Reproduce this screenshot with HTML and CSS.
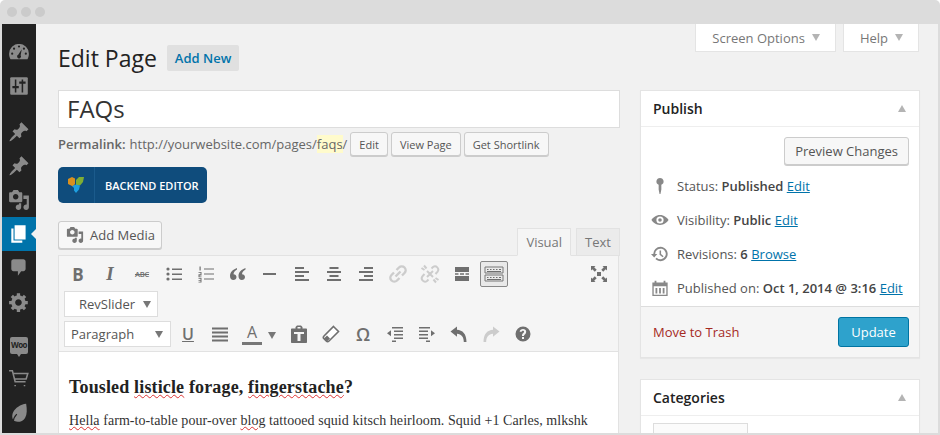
FILE: index.html
```html
<!DOCTYPE html>
<html lang="en">
<head>
<meta charset="UTF-8">
<title>Edit Page</title>
<link rel="stylesheet" href="styles.css">
</head>
<body>
<div class="window">
<div class="titlebar"><i class="dot"></i><i class="dot"></i><i class="dot"></i></div>
<div class="frame">

<nav class="sidebar">
<div class="menu-group">
<a class="menu-item"><svg viewBox="0 0 20 20"><path d="M10 2.500a9 9 0 0 0-9 9c0 1.900.5 3.500 1.300 5h15.400c.8-1.500 1.300-3.100 1.300-5a9 9 0 0 0-9-9z"/><g fill="#222"><circle cx="10" cy="5" r="1"/><circle cx="5.500" cy="7" r="1"/><circle cx="14.500" cy="7" r="1"/><circle cx="3.800" cy="11.500" r="1"/><circle cx="16.200" cy="11.500" r="1"/><path d="M12.500 7.500l-1 5.500a1.800 1.800 0 1 1-2.200-.6z"/></g></svg></a>
<a class="menu-item"><svg viewBox="0 0 20 20"><rect x="2" y="2" width="16" height="16" rx="1"/><path d="M6.200 4h1.400v6H6.200zM4 10h5.800v2H4zM6.200 12h1.400v4H6.200zM12.400 4h1.400v2h-1.400zM10.200 6H16v2h-5.800zM12.400 8h1.400v8h-1.400z" fill="#222"/></svg></a>
</div>
<div class="menu-group">
<a class="menu-item"><svg viewBox="0 0 20 20"><path d="M10.440 3.020l1.820-1.820 6.360 6.350-1.830 1.820c-1.050-.68-2.480-.57-3.410.36l-.75.75c-.92.93-1.040 2.350-.35 3.410l-1.830 1.820-2.410-2.410-2.800 2.790c-.42.42-3.380 2.710-3.800 2.290s1.860-3.390 2.280-3.810l2.790-2.790L4.100 9.360l1.830-1.820c1.050.69 2.480.57 3.400-.36l.75-.75c.93-.92 1.050-2.350.36-3.410z"/></svg></a>
<a class="menu-item"><svg viewBox="0 0 20 20"><path d="M10.440 3.020l1.820-1.820 6.360 6.350-1.830 1.820c-1.050-.68-2.480-.57-3.410.36l-.75.75c-.92.93-1.040 2.350-.35 3.410l-1.830 1.820-2.410-2.410-2.800 2.790c-.42.42-3.380 2.710-3.800 2.290s1.860-3.390 2.280-3.810l2.790-2.790L4.100 9.360l1.830-1.820c1.050.69 2.480.57 3.400-.36l.75-.75c.93-.92 1.050-2.350.36-3.410z"/></svg></a>
<a class="menu-item"><svg viewBox="0 0 20 20"><path d="M13 11V4c0-.55-.45-1-1-1h-1.670L9 1H5L3.670 3H2c-.55 0-1 .45-1 1v7c0 .55.45 1 1 1h10c.55 0 1-.45 1-1zM7 4.500c1.380 0 2.500 1.120 2.500 2.500S8.380 9.500 7 9.500 4.500 8.380 4.500 7 5.620 4.500 7 4.500zM14 6h5v10.500c0 1.380-1.120 2.500-2.500 2.500S14 17.880 14 16.500s1.120-2.500 2.500-2.500c.17 0 .34.02.5.05V9h-3V6zm-4 8.050V13h2v3.500c0 1.380-1.120 2.500-2.500 2.500S7 17.880 7 16.500 8.120 14 9.500 14c.17 0 .34.02.5.05z"/></svg></a>
<a class="menu-item active"><svg viewBox="0 0 20 20"><path d="M6 15V2h10v13H6zm-1 1h8v2H3V5h2v11z"/></svg></a>
<a class="menu-item"><svg viewBox="0 0 20 20"><path d="M5 2h9c1.100 0 2 .9 2 2v7c0 1.100-.9 2-2 2h-2l-3 4v-4H5c-1.100 0-2-.9-2-2V4c0-1.100.9-2 2-2z"/></svg></a>
<a class="menu-item"><svg viewBox="0 0 20 20"><path d="M18 12h-2.180c-.17.7-.44 1.350-.81 1.930l1.540 1.540-2.100 2.100-1.540-1.540c-.58.36-1.230.63-1.910.79V19H8v-2.180c-.68-.16-1.330-.43-1.910-.79l-1.540 1.540-2.120-2.120 1.540-1.540c-.36-.58-.63-1.230-.79-1.910H1V9.030h2.170c.16-.7.44-1.350.8-1.940L2.430 5.550l2.100-2.100 1.540 1.540c.58-.37 1.240-.64 1.930-.81V2h3v2.180c.68.16 1.330.43 1.910.79l1.540-1.540 2.120 2.120-1.540 1.540c.36.59.64 1.240.8 1.940H18V12zm-8.500 1.500c1.660 0 3-1.340 3-3s-1.340-3-3-3-3 1.340-3 3 1.340 3 3 3z"/></svg></a>
</div>
<div class="menu-group">
<a class="menu-item"><span class="woo">Woo</span></a>
<a class="menu-item"><svg viewBox="0 0 20 20"><path d="M1 2.500h3l2.500 10h9.500M5 5h13l-1.500 5H6.200M6.500 15.500v1M15 15.500v1" fill="none" stroke="#8a8a8a" stroke-width="1.400"/></svg></a>
<a class="menu-item"><svg viewBox="0 0 20 20"><path d="M16.500 1.500c.8 5 1 9.500-1 13-2 3.200-6.500 4.500-9.500 2.800-2.300-1.500-2.800-5.200-1.200-8.300 1.700-3.500 6.500-7 11.700-7.500z"/><path d="M4.500 18.500c.3-3 1.500-5.500 3.500-7.500" fill="none" stroke="#222"/></svg></a>
</div>
</nav>

<main class="content">
<div class="screen-meta">
<a class="meta-tab">Screen Options <i class="caret"></i></a>
<a class="meta-tab">Help <i class="caret"></i></a>
</div>

<div class="columns">
<section class="col-main">
<div class="page-head">
<h1>Edit Page</h1>
<a class="add-new">Add New</a>
</div>
<div class="title-input">FAQs</div>
<div class="permalink">
<b>Permalink:</b>
<span class="url">http://yourwebsite.com/pages/<mark>faqs</mark>/</span>
<a class="btn small">Edit</a>
<a class="btn small">View Page</a>
<a class="btn small">Get Shortlink</a>
</div>
<a class="backend-btn">
<span class="backend-logo"><svg viewBox="0 0 20 20" width="20" height="20"><path d="M2 4l4-2 3 1.500V9l-2 2.500L2 9z" fill="#d9901f"/><path d="M10 5l3-3h5l-1 5-3 3.500-4-.5z" fill="#7fae34"/><path d="M6 11l4-1.500 4 1-1 4-3 3.500-2-2.500v-2.500z" fill="#1d9fe0"/></svg></span>
<span class="backend-label">BACKEND EDITOR</span>
</a>

<div class="editor-top">
<a class="btn media-btn"><svg viewBox="0 0 20 20" width="18" height="18"><path d="M13 11V4c0-.55-.45-1-1-1h-1.670L9 1H5L3.670 3H2c-.55 0-1 .45-1 1v7c0 .55.45 1 1 1h10c.55 0 1-.45 1-1zM7 4.500c1.380 0 2.500 1.120 2.500 2.500S8.380 9.500 7 9.500 4.500 8.380 4.500 7 5.620 4.500 7 4.500zM14 6h5v10.500c0 1.380-1.120 2.500-2.500 2.500S14 17.880 14 16.500s1.120-2.500 2.500-2.500c.17 0 .34.02.5.05V9h-3V6zm-4 8.050V13h2v3.500c0 1.380-1.120 2.500-2.500 2.500S7 17.880 7 16.500 8.120 14 9.500 14c.17 0 .34.02.5.05z"/></svg> Add Media</a>
<div class="tabs">
<a class="tab current">Visual</a>
<a class="tab">Text</a>
</div>
</div>

<div class="editor">
<div class="toolbar">
<div class="tb-row">
<a class="tb tb-b">B</a>
<a class="tb tb-i">I</a>
<a class="tb tb-abc">ABC</a>
<a class="tb"><svg viewBox="0 0 20 20"><circle cx="4" cy="5" r="1.600"/><circle cx="4" cy="10" r="1.600"/><circle cx="4" cy="15" r="1.600"/><path d="M8 4.500h10V6H8zM8 9.500h10V11H8zM8 14.500h10V16H8z"/></svg></a>
<a class="tb"><svg viewBox="0 0 20 20"><path d="M8 4.500h10V5.500H8zM8 9.500h10v1H8zM8 14.500h10v1H8zM3.500 2.500h1.200v4H3.500zM2.500 8h3v3.500h-2v1h2v.8h-3v-3h2v-1.500h-2zM2.500 14h3v4.500h-3v-.8h2v-1h-2v-.7h2v-1.200h-2z"/></svg></a>
<a class="tb"><svg viewBox="0 0 20 20"><path d="M9 4C4.500 5.500 2 8.500 2 12c0 2.500 1.500 4 3.300 4S8.500 14.700 8.500 13s-1.300-2.800-3-2.800c.2-2 1.500-3.800 3.500-4.800zM17.500 4C13 5.500 10.500 8.500 10.500 12c0 2.500 1.500 4 3.300 4s3.200-1.300 3.200-3-1.300-2.800-3-2.800c.2-2 1.500-3.800 3.500-4.800z"/></svg></a>
<a class="tb"><svg viewBox="0 0 20 20"><path d="M3 9h13v2H3z"/></svg></a>
<a class="tb"><svg viewBox="0 0 20 20"><path d="M3 3h9v2H3zM3 7h14v2H3zM3 11h9v2H3zM3 15h14v2H3z"/></svg></a>
<a class="tb"><svg viewBox="0 0 20 20"><path d="M5.500 3h9v2h-9zM3 7h14v2H3zM5.500 11h9v2h-9zM3 15h14v2H3z"/></svg></a>
<a class="tb"><svg viewBox="0 0 20 20"><path d="M8 3h9v2H8zM3 7h14v2H3zM8 11h9v2H8zM3 15h14v2H3z"/></svg></a>
<a class="tb off"><svg viewBox="0 0 20 20"><path d="M7.500 12.500l5-5M8.500 6l2.500-2.500a3.800 3.800 0 0 1 5.500 5.500L14 11.500M11.500 14L9 16.500A3.800 3.800 0 0 1 3.500 11L6 8.500" fill="none" stroke="#ccc" stroke-width="2.400"/></svg></a>
<a class="tb off"><svg viewBox="0 0 20 20"><path d="M11.500 4.500l1.500-1.500a3.300 3.300 0 0 1 4.600 4.600L15.500 10M8.500 15.500L7 17a3.300 3.300 0 0 1-4.600-4.600L4.500 10M4 1.500l2.500 3M1.500 4l3 2M16 18.500l-2.500-3M18.500 16l-3-2M7 7l6 6M13 7l-6 6" fill="none" stroke="#ccc" stroke-width="2"/></svg></a>
<a class="tb"><svg viewBox="0 0 20 20"><path d="M3 3h14v5H3zM3 12h14v5H3zM3 9.300h3.500v1.400H3zM8 9.300h4v1.400H8zM13.500 9.300H17v1.400h-3.500z"/></svg></a>
<a class="tb kitchen"><svg viewBox="0 0 20 20"><path d="M1 3h18v6H1zM1 11h18v6H1z" fill="none" stroke="#777"/><path d="M3 5h1.500v1H3zM6 5h1.500v1H6zM9 5h1.500v1H9zM12 5h1.500v1H12zM15 5h2v1h-2zM3 7h14v1H3zM3 13h1.500v1H3zM6 13h1.500v1H6zM9 13h1.500v1H9zM12 13h1.500v1H12zM15 13h2v1h-2zM3 15h14v1H3z"/></svg></a>
<a class="tb fullscreen"><svg viewBox="0 0 20 20"><path d="M2 2h4.500L5.200 3.300 7.700 5.800 5.800 7.700 3.300 5.200 2 6.500zM18 2v4.500l-1.300-1.300-2.500 2.500-1.900-1.900 2.500-2.500L13.500 2zM2 18v-4.500l1.300 1.300 2.500-2.500 1.900 1.900-2.500 2.500L6.500 18zM18 18h-4.500l1.300-1.300-2.500-2.500 1.900-1.900 2.500 2.500 1.300-1.300z"/><path d="M8 8h4v4H8z"/></svg></a>
</div>
<div class="tb-row">
<div class="select rev">RevSlider <i class="caret dark"></i></div>
</div>
<div class="tb-row">
<div class="select para">Paragraph <i class="caret dark"></i></div>
<a class="tb tb-u">U</a>
<a class="tb"><svg viewBox="0 0 20 20"><path d="M2 3.500h16v2H2zM2 7.500h16v2H2zM2 11.500h16v2H2zM2 15.500h16v2H2z"/></svg></a>
<a class="tb"><span class="a-mark">A</span></a>
<a class="tb-arrow"><i class="caret dark"></i></a>
<a class="tb"><svg viewBox="0 0 20 20"><path d="M3 4.500h3.500V3l1.500-1.500h4L13.500 3v1.500H17c.6 0 1 .4 1 1V18c0 .6-.4 1-1 1H3c-.6 0-1-.4-1-1V5.500c0-.6.4-1 1-1zM8.500 3v1.500h3V3zM5 8v2h3.500v7h3v-7H15V8z"/></svg></a>
<a class="tb"><svg viewBox="0 0 20 20"><path d="M12.500 2.500l5 5-9.500 9.500c-.8.8-2 .8-2.800 0l-2.200-2.200c-.8-.8-.8-2 0-2.800z" fill="#fff" stroke="#6f6f6f" stroke-width="1.600"/><path d="M6 11.500l-3 3 3 3 3-3z"/></svg></a>
<a class="tb tb-omega">Ω</a>
<a class="tb"><svg viewBox="0 0 20 20"><path d="M7 3h11v1.500H7zM9 6.500h9V8H9zM9 10h9v1.500H9zM9 13.500h9V15H9zM7 16.500h4V18H7zM2 9.200l4-3v6z"/></svg></a>
<a class="tb"><svg viewBox="0 0 20 20"><path d="M2 3h11v1.500H2zM2 6.500h9V8H2zM2 10h9v1.500H2zM2 13.500h9V15H2zM9 16.500h4V18H9zM18 9.200l-4-3v6z"/></svg></a>
<a class="tb"><svg viewBox="0 0 20 20"><path d="M1.500 7.500L8 2.500v3.200c5.500.3 9.500 4 9.500 12.300h-2.700c0-5-2.300-8-6.800-8.300v3z"/></svg></a>
<a class="tb off-fill"><svg viewBox="0 0 20 20"><path d="M18.500 7.500L12 2.500v3.200C6.500 6 2.500 9.700 2.500 18h2.700c0-5 2.300-8 6.800-8.300v3z"/></svg></a>
<a class="tb"><svg viewBox="0 0 20 20"><path fill-rule="evenodd" d="M10 2.500a7.500 7.500 0 1 1 0 15 7.500 7.500 0 0 1 0-15zM9 13v2h2v-2zM10 5c-1.800 0-3.200 1-3.300 2.800h2c0-.6.500-1 1.200-1s1.200.4 1.200 1c0 1.200-2.100 1.500-2.100 3.700V12h2v-.3c0-1.300 2.200-1.700 2.200-4C13.200 6 11.800 5 10 5z"/></svg></a>
</div>
</div>
<div class="editor-body">
<h3>Tousled <u>listicle</u> forage, <u>fingerstache</u>?</h3>
<p><u>Hella</u> farm-to-table pour-over <u>blog</u> tattooed squid kitsch heirloom. Squid +1 Carles, mlkshk</p>
</div>
</div>
</section>

<aside class="col-side">
<div class="box publish">
<div class="box-head"><h2>Publish</h2><i class="caret up"></i></div>
<div class="preview-row"><a class="btn preview">Preview Changes</a></div>
<ul class="pub-list">
<li><svg viewBox="0 0 20 20"><path d="M10 1a4 4 0 0 1 1.500 7.700V14l-1 5h-1l-1-5V8.700A4 4 0 0 1 10 1z"/></svg><span>Status: <b>Published</b> <a>Edit</a></span></li>
<li><svg viewBox="0 0 20 20"><path fill-rule="evenodd" d="M10 4.500c4.500 0 8 3 9.500 5.500-1.500 2.500-5 5.500-9.500 5.500S2 12.500.5 10C2 7.500 5.500 4.500 10 4.500zM10 6a4 4 0 1 0 0 8 4 4 0 0 0 0-8zM10 8a2 2 0 1 1 0 4 2 2 0 0 1 0-4z"/></svg><span>Visibility: <b>Public</b> <a>Edit</a></span></li>
<li><svg viewBox="0 0 20 20"><path d="M10.500 2a8 8 0 1 1-5.700 13.600l1.500-1.500A5.900 5.900 0 1 0 4.600 10H7l-3.500 4L0 10h2.500a8 8 0 0 1 8-8zM9.500 6h1.700v4l2.800 2.500-1.100 1.200-3.400-3z"/></svg><span>Revisions: <b>6</b> <a>Browse</a></span></li>
<li><svg viewBox="0 0 20 20"><path fill-rule="evenodd" d="M4 2h2v2h8V2h2v2h2.500v15h-17V4H4zM3 8v9.500h14V8zM5 10h2v6H5zM9 10h2v6H9zM13 10h2v6h-2z"/></svg><span>Published on: <b>Oct 1, 2014 @ 3:16</b> <a>Edit</a></span></li>
</ul>
<div class="box-foot">
<a class="trash">Move to Trash</a>
<a class="update">Update</a>
</div>
</div>
<div class="box categories">
<div class="box-head"><h2>Categories</h2><i class="caret up"></i></div>
<div class="cat-tabs"><a class="cat-tab">All Categories</a><a class="cat-link">Most Used</a></div>
</div>
</aside>
</div>
</main>
</div>
</div>
</body>
</html>
```

FILE: styles.css
```css
* {
box-sizing: border-box;
}

html, body {
margin: 0;
height: 100%;
overflow: hidden;
}

body {
background: #fff;
font-family: "Open Sans", sans-serif;
font-size: 13px;
color: #444;
}

a {
color: inherit;
text-decoration: none;
}

.window {
width: 940px;
height: 435px;
display: flex;
flex-direction: column;
background: #dcdcdc;
border-radius: 5px 5px 0 0;
overflow: hidden;
}

.titlebar {
height: 24px;
flex: none;
display: flex;
align-items: center;
gap: 4px;
padding-left: 7px;
}

.dot {
width: 10px;
height: 10px;
border-radius: 50%;
background: #cbcbcb;
}

.frame {
flex: 1;
min-height: 0;
display: flex;
margin: 0 2px 2px 2px;
background: #f1f1f1;
overflow: hidden;
}

/* left menu */
.sidebar {
width: 34px;
flex: none;
background: #222;
padding-top: 11px;
}

.menu-group + .menu-group {
margin-top: 12px;
}

.menu-group:last-child {
margin-top: 9px;
}

.menu-item {
height: 34px;
display: flex;
align-items: center;
justify-content: center;
position: relative;
}

.menu-item svg {
width: 22px;
height: 22px;
fill: #8a8a8a;
}

.menu-item.active {
background: #0073aa;
}

.menu-item.active svg {
fill: #fff;
}

.menu-item.active::after {
content: "";
position: absolute;
right: 0;
top: 12px;
border: 5px solid transparent;
border-right-color: #f1f1f1;
border-left-width: 0;
}

.woo {
width: 18px;
height: 17px;
background: #8a8a8a;
border-radius: 2px;
color: #222;
font-size: 8px;
font-weight: 700;
line-height: 16px;
text-align: center;
letter-spacing: -.5px;
position: relative;
}

.woo::after {
content: "";
position: absolute;
left: 7px;
bottom: -3px;
border: 2px solid transparent;
border-top: 3px solid #8a8a8a;
border-bottom: 0;
}

/* main area */
.content {
flex: 1;
min-width: 0;
position: relative;
padding: 0 18px 0 22px;
}

.screen-meta {
position: absolute;
top: 0;
right: 19px;
display: flex;
gap: 7px;
}

.meta-tab {
height: 28px;
padding: 0 15px 0 16px;
background: #fff;
border: 1px solid #e4e4e4;
border-top: 0;
color: #777;
display: flex;
align-items: center;
gap: 7px;
}

.caret {
display: inline-block;
width: 0;
height: 0;
border: 4.500px solid transparent;
border-top: 7px solid #b4b4b4;
border-bottom: 0;
}

.caret.dark {
border-top-color: #777;
}

.caret.up {
border-top: 0;
border-bottom: 7px solid #b4b4b4;
}

.columns {
display: flex;
gap: 20px;
align-items: flex-start;
}

.col-main {
width: 562px;
flex: none;
}

.col-side {
width: 280px;
flex: none;
padding-top: 66px;
}

.page-head {
display: flex;
align-items: center;
height: 66px;
gap: 10px;
padding-top: 2px;
}

h1 {
margin: 0;
font-size: 23px;
font-weight: 400;
color: #222;
}

.add-new {
height: 26px;
line-height: 26px;
padding: 0 8px;
background: #e0e0e0;
border-radius: 2px;
color: #0073aa;
font-weight: 600;
}

.title-input {
height: 38px;
background: #fff;
border: 1px solid #ddd;
padding-left: 8px;
font-size: 24px;
line-height: 36px;
color: #333;
}

.permalink {
height: 29px;
display: flex;
align-items: center;
gap: 3px;
color: #666;
padding-top: 3px;
white-space: pre;
}

.permalink b {
font-weight: 600;
margin-right: 1px;
}

.btn {
display: inline-flex;
align-items: center;
background: #f7f7f7;
border: 1px solid #ccc;
border-radius: 3px;
box-shadow: 0 1px 0 #ccc;
color: #555;
}

.btn.small {
height: 24px;
padding: 0 8px;
font-size: 11px;
}

mark {
background: #fffbcc;
color: inherit;
}

.backend-btn {
margin-top: 10px;
width: 149px;
height: 36px;
display: flex;
align-items: center;
background: #0f4c7c;
border-radius: 5px;
color: #fff;
font-size: 11px;
font-weight: 600;
}

.backend-logo {
width: 37px;
height: 100%;
flex: none;
display: flex;
align-items: center;
justify-content: center;
border-right: 1px solid #1b5b8c;
}

.backend-label {
padding-left: 10px;
}

.editor-top {
display: flex;
justify-content: space-between;
align-items: flex-end;
margin-top: 18px;
height: 34px;
}

.media-btn {
align-self: flex-start;
width: 104px;
height: 28px;
padding-left: 7px;
gap: 6px;
font-size: 13px;
}

.media-btn svg {
fill: #777;
}

.tabs {
display: flex;
gap: 5px;
margin-bottom: -1px;
}

.tab {
height: 28px;
padding: 0 8px;
line-height: 27px;
background: #ebebeb;
border: 1px solid #e2e2e2;
color: #777;
}

.tab.current {
background: #f5f5f5;
border-bottom-color: #f5f5f5;
position: relative;
z-index: 1;
}

.editor {
border: 1px solid #e2e2e2;
width: 561px;
}

.toolbar {
background: #f5f5f5;
border-bottom: 1px solid #e2e2e2;
padding: 5px 3px 4px;
display: flex;
flex-direction: column;
gap: 4px;
height: 96px;
}

.tb-row {
display: flex;
align-items: center;
height: 26px;
}

.tb {
width: 32px;
height: 26px;
flex: none;
display: flex;
align-items: center;
justify-content: center;
color: #6f6f6f;
}

.tb svg {
width: 20px;
height: 20px;
fill: #6f6f6f;
}

.tb.off svg {
fill: none;
}

.tb.off-fill svg {
fill: #ccc;
}

.tb-b {
font-size: 17px;
font-weight: 700;
}

.tb-i {
font-family: "Liberation Serif", serif;
font-size: 19px;
font-weight: 700;
font-style: italic;
}

.tb-abc {
font-size: 7.500px;
font-weight: 600;
text-decoration: line-through;
letter-spacing: -.2px;
}

.tb-u {
font-size: 16px;
font-weight: 600;
text-decoration: underline;
}

.a-mark {
width: 20px;
height: 22px;
border-bottom: 3px solid #777;
text-align: center;
font-size: 16px;
line-height: 19px;
}

.tb-arrow {
width: 15px;
flex: none;
}

.tb-omega {
font-size: 18px;
font-weight: 600;
}

.kitchen {
width: 28px;
margin: 0 2px;
background: #e9e9e9;
border: 1px solid #888;
border-radius: 2px;
}

.fullscreen {
margin-left: auto;
}

.select {
height: 26px;
background: #fff;
border: 1px solid #ddd;
display: flex;
align-items: center;
justify-content: space-between;
color: #555;
font-size: 13px;
line-height: 22px;
flex: none;
margin-left: 2px;
}

.select.rev {
width: 94px;
padding: 0 6px 0 14px;
}

.select.para {
width: 107px;
padding: 0 7px 0 6px;
margin-right: 1px;
}

.editor-body {
background: #fff;
padding: 25px 10px 0;
height: 200px;
font-family: "Liberation Serif", serif;
color: #333;
}

.editor-body h3 {
margin: 0 0 15px;
font-size: 18px;
font-weight: 700;
color: #222;
letter-spacing: .15px;
}

.editor-body p {
margin: 0;
font-size: 14px;
letter-spacing: .06px;
white-space: nowrap;
}

.editor-body u {
text-decoration: underline wavy #d33;
text-decoration-thickness: 1px;
}

/* right column */
.box {
background: #fff;
border: 1px solid #e4e4e4;
margin-bottom: 21px;
box-shadow: 0 1px 1px rgba(0, 0, 0, .04);
}

.box-head {
height: 36px;
border-bottom: 1px solid #eee;
display: flex;
align-items: center;
justify-content: space-between;
padding: 0 13px 0 12px;
}

.box-head h2 {
margin: 0;
font-size: 14px;
font-weight: 600;
color: #222;
}

.preview-row {
display: flex;
justify-content: flex-end;
padding: 10px 10px 0;
}

.btn.preview {
height: 28px;
padding: 0 10px;
font-size: 13px;
}

.pub-list {
list-style: none;
margin: 0;
padding: 4px 0 0;
height: 141px;
}

.pub-list li {
height: 34px;
display: flex;
align-items: center;
gap: 8px;
padding-left: 10px;
color: #555;
}

.pub-list svg {
width: 18px;
height: 18px;
fill: #888;
flex: none;
}

.pub-list b {
font-weight: 600;
color: #444;
}

.pub-list a {
color: #0073aa;
text-decoration: underline;
}

.box-foot {
height: 51px;
background: #f5f5f5;
border-top: 1px solid #ddd;
display: flex;
align-items: center;
justify-content: space-between;
padding: 0 10px 0 12px;
}

.trash {
color: #a52a1f;
}

.update {
width: 71px;
height: 30px;
background: #2ea2cc;
border: 1px solid #0074a2;
border-radius: 3px;
color: #fff;
text-align: center;
line-height: 29px;
}

.cat-tabs {
display: flex;
gap: 20px;
padding: 7px 12px 0;
color: #555;
}

.cat-tab {
padding: 6px 14px 0;
width: 95px;
height: 30px;
background: #fbfbfb;
border: 1px solid #ddd;
white-space: nowrap;
font-size: 12px;
}

.cat-link {
padding-top: 7px;
font-size: 12px;
color: #0073aa;
}
```
